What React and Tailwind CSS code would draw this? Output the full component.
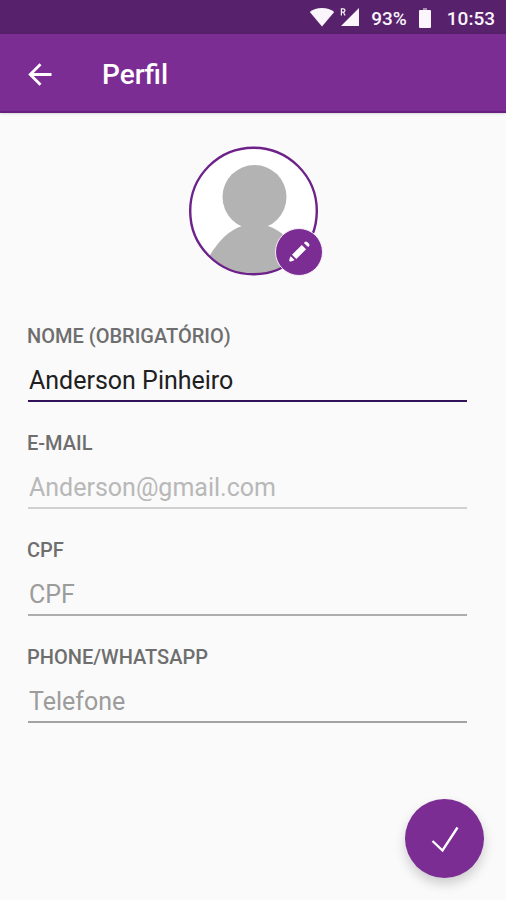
const fields = [
  {
    id: "nome",
    label: "NOME (OBRIGATÓRIO)",
    type: "text",
    value: "Anderson Pinheiro",
    tone: "border-[#32135a] text-[#202020]",
  },
  {
    id: "email",
    label: "E-MAIL",
    type: "email",
    value: "Anderson@gmail.com",
    readOnly: true,
    tone: "border-[#d0d0d0] text-[#b8b8b8]",
  },
  { id: "cpf", label: "CPF", type: "text", placeholder: "CPF", tone: "border-[#adadad]" },
  {
    id: "telefone",
    label: "PHONE/WHATSAPP",
    type: "tel",
    placeholder: "Telefone",
    tone: "border-[#a3a3a3]",
  },
];

function StatusBar() {
  return (
    <div className="flex h-[34px] items-center justify-end bg-[#58216b] pr-[11px] pt-[2px] text-[19px] font-medium leading-none text-[#fbf5fc]">
      <svg className="mr-[5px] h-5 w-[26px]" viewBox="0 0 26 20" fill="currentColor" aria-hidden="true">
        <path d="M13 18.5 0.8 4C4 1.4 8.2 0 13 0s9 1.4 12.2 4z" />
      </svg>
      <svg className="mr-[11px] h-5 w-5" viewBox="0 0 20 20" aria-hidden="true">
        <path d="M19 0v18H1z" fill="currentColor" />
        <path d="M1.4 7.5V0.8h1.8a1.7 1.7 0 0 1 0 3.4H1.4M3.3 4.3l1.8 3.2" fill="none" stroke="currentColor" strokeWidth="1.2" />
      </svg>
      <span className="mr-[12px]">93%</span>
      <svg className="mr-[16px] h-5 w-[12px]" viewBox="0 0 12 20" aria-hidden="true">
        <path d="M4 0h4v2H4z" fill="#a98bb3" />
        <path d="M0 3q0-1 1-1h10q1 0 1 1v16q0 1-1 1H1q-1 0-1-1z" fill="currentColor" />
      </svg>
      <span>10:53</span>
    </div>
  );
}

function Avatar() {
  return (
    <div className="relative size-[130px]">
      <svg className="size-full" viewBox="0 0 130 130" role="img" aria-label="Foto do perfil">
        <defs>
          <clipPath id="avatar-clip">
            <circle cx="65.5" cy="65" r="63" />
          </clipPath>
        </defs>
        <circle cx="65.5" cy="65" r="63.5" fill="#fff" />
        <g clipPath="url(#avatar-clip)" fill="#b3b3b3">
          <circle cx="66.5" cy="51" r="32" />
          <path d="M16 120C27 98 39 85 54 80h26c15 5 27 18 38 40v12H16z" />
        </g>
        <circle cx="65.5" cy="65" r="63.3" fill="none" stroke="#6d2189" strokeWidth="2.4" />
      </svg>
      <button
        type="button"
        aria-label="Editar foto"
        className="absolute -right-[5px] bottom-0 flex size-12 items-center justify-center rounded-full border border-[#f5edf7] bg-[#7b2d94] text-white"
      >
        <svg className="size-6" viewBox="0 0 24 24" fill="currentColor" aria-hidden="true">
          <path d="M16.9 2.9 17.8 2q1.2-1.2 2.4 0l1.8 1.8q1.2 1.2 0 2.4l-.9.9z" />
          <path d="M14.8 4.9l4.3 4.3L9.3 19 5 14.7z" />
          <path d="M3.7 16.2 7.6 20.1q-2.5 1.7-4.6 1.4-.9-.2-.8-1 .1-2.4 1.5-4.3z" />
        </svg>
      </button>
    </div>
  );
}

function Field({ id, label, type, value, placeholder, readOnly, tone }) {
  return (
    <div className="flex flex-col gap-3">
      <label htmlFor={id} className="text-[20px] font-medium leading-6 text-[#6e6e6e]">
        {label}
      </label>
      <input
        id={id}
        type={type}
        defaultValue={value}
        placeholder={placeholder}
        readOnly={readOnly}
        className={"mx-px h-[42px] min-w-0 rounded-none border-b-2 bg-transparent pl-px text-[25px] outline-none placeholder:text-[#9c9c9c] " + tone}
      />
    </div>
  );
}

export default function App() {
  return (
    <div className="flex min-h-screen flex-col bg-[#fafafa] font-[Roboto,sans-serif]">
      <StatusBar />
      <header className="flex h-[79px] items-center gap-[48px] border-b-2 border-[#682080] bg-[#7b2d94] px-[26px] pt-1 text-white shadow-sm">
        <button type="button" aria-label="Voltar" className="flex size-7 items-center justify-center">
          <svg className="size-7" viewBox="0 0 28 28" fill="none" stroke="currentColor" strokeWidth="2.8" aria-hidden="true">
            <path d="M25.5 13.5H4.5M14.5 3.2 4.2 13.5l10.3 10.3" />
          </svg>
        </button>
        <h1 className="text-[28px] font-medium leading-8">Perfil</h1>
      </header>
      <main className="flex flex-1 flex-col">
        <div className="flex justify-center pt-[33px]">
          <Avatar />
        </div>
        <form id="perfil" className="mt-12 flex flex-col gap-[29px] pl-[27px] pr-[38px]">
          {fields.map((field) => (
            <Field key={field.id} {...field} />
          ))}
        </form>
      </main>
      <footer className="flex justify-end px-[22px] pb-[22px]">
        <button
          type="submit"
          form="perfil"
          aria-label="Salvar"
          className="flex size-[79px] items-center justify-center rounded-full bg-[#7b2d94] text-white shadow-[0_6px_12px_rgba(0,0,0,0.18)]"
        >
          <svg className="size-7" viewBox="0 0 28 28" fill="none" stroke="currentColor" strokeWidth="2.4" aria-hidden="true">
            <path d="M1.5 16 11.5 25.5 26.5 2.5" />
          </svg>
        </button>
      </footer>
    </div>
  );
}
